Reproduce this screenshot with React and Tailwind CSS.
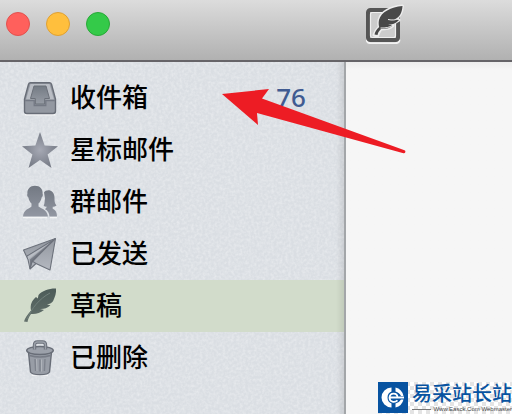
import { useState } from 'react'

const folders = [
  { id: 'inbox', label: '收件箱', icon: InboxIcon, count: 76 },
  { id: 'starred', label: '星标邮件', icon: StarIcon },
  { id: 'group', label: '群邮件', icon: PeopleIcon },
  { id: 'sent', label: '已发送', icon: PlaneIcon },
  { id: 'drafts', label: '草稿', icon: FeatherIcon },
  { id: 'trash', label: '已删除', icon: TrashIcon },
]

function InboxIcon() {
  return (
    <svg viewBox="0 0 36 36" className="size-9 shrink-0" aria-hidden="true">
      <path d="M3.5 34.8h29" stroke="#f4f5f6" strokeWidth="1.5" strokeLinecap="round" />
      <path d="M8.500 2.700h19q1.500 0 2 1.500l4 15v11.800a2.500 2.500 0 0 1-2.500 2.500H5a2.500 2.500 0 0 1-2.500-2.500V19.200l4-15q.5-1.500 2-1.500z" fill="#9398a1" stroke="#686d77" strokeWidth="1.400" />
      <path d="M8.500 4h19l4.500 15.500H4z" fill="#b9bdc4" />
      <path d="M12 6h12l3.500 12.500h-4.800v5.500h-9.400v-5.500H8.500z" fill="url(#tray)" stroke="#6b7079" strokeWidth="1" />
      <path d="M3.200 20.500h9V25.500h11.600v-5h9" fill="none" stroke="#747984" strokeWidth="1.300" />
    </svg>
  )
}

function StarIcon() {
  return (
    <svg viewBox="0 0 36 36" className="size-9 shrink-0" aria-hidden="true">
      <path d="M18 0l4.600 13.600L36 14.200 25.600 22.500 29.500 36 18 28 6.500 36l3.900-13.500L0 14.200l13.400-.6z" fill="url(#glow)" />
    </svg>
  )
}

function PeopleIcon() {
  return (
    <svg viewBox="0 0 36 36" className="size-9 shrink-0" aria-hidden="true">
      <path d="M1 33.500h24M28 33.500h7" stroke="#f4f5f6" strokeWidth="1.500" />
      <path d="M22 8.500c1.500-2.500 6-3 8.500-.5 2 2 2.200 5 2 8 .1 2.500.8 4 2 5.500-1 1-2.300 1.200-3.800 1.200v2c2.500 1.300 4.300 3 4.300 7.800h-7.500c-.3-3.700-1.800-6-4.500-7.200l2-2.600c-1.500 0-2.500-.3-3.300-1 1.300-2.700.7-4.700 1.300-7.200z" fill="url(#steel)" />
      <path d="M13 1.700c5 0 8 3.300 7.600 8 .6 1.500 0 3-1 3.700-.5 2.800-1.600 4.800-3.100 6v3c1.500 1.700 8.500 2.300 9.500 10.100H1c.5-7.300 6.500-8 8.500-10.100v-3c-1.500-1.200-2.600-3.200-3.100-6-1-.7-1.600-2.200-1-3.700-.4-4.700 2.600-8 7.600-8z" fill="url(#steel)" />
    </svg>
  )
}

function PlaneIcon() {
  return (
    <svg viewBox="0 0 36 36" className="size-9 shrink-0" aria-hidden="true">
      <path d="M33.500 2.500L1.500 14l4.500 9.500L8 33l6-5.500 14 6.500z" fill="url(#paper)" stroke="#6c717b" strokeWidth="1.100" strokeLinejoin="round" />
      <path d="M33 3L6 18.500v5L33 3z" fill="#b9bdc4" />
      <path d="M33 3L8 23.500V33l2.500-6.500z" fill="#777c86" />
      <path d="M33 3L5 20M33 3L10 25l4 2.500M10 25l-2 8" fill="none" stroke="#6c717b" strokeWidth="1.100" />
    </svg>
  )
}

function FeatherIcon() {
  return (
    <svg viewBox="0 0 36 36" className="size-9 shrink-0" aria-hidden="true">
      <path d="M34 .5C27 .3 20 3 16.500 7l-.7 3.500-1.800-1.500C9.500 13 8 17 9 22.500 5 27 3 30 2 33.500l3.500.5c.5-3 1.500-5 3.500-8 5 .5 9-1 13-4l-4-1c4 .2 7-.8 10.500-3.800l-3.500-.8c2.500-.3 4.500-1.200 6-3.200C33 9 34.500 5 34 .5z" fill="url(#quill)" />
      <path d="M5 31C10 20 17 11 28 5" fill="none" stroke="#71807b" strokeWidth="1" />
    </svg>
  )
}

function TrashIcon() {
  return (
    <svg viewBox="0 0 36 36" className="size-9 shrink-0" aria-hidden="true">
      <path d="M10 35.500q8 2 16 0" fill="none" stroke="#f4f5f6" strokeWidth="1.500" />
      <path d="M6.500 12h23l-2 20c-2 3.500-17 3.500-19 0z" fill="#989da6" stroke="#686d77" strokeWidth="1.400" />
      <path d="M7.500 15.500q10.500 3 21 0" fill="none" stroke="#777c86" strokeWidth="1.600" />
      <path d="M13 19l.6 12M18 19.500v12M23 19l-.6 12" stroke="#7e838d" strokeWidth="1.400" />
      <path d="M14.500 19l.5 12M19.500 19.500v12" stroke="#b0b4bb" strokeWidth="1" />
      <ellipse cx="18" cy="10.500" rx="13.300" ry="4" fill="#9ca1aa" stroke="#686d77" strokeWidth="1.400" />
      <path d="M12.500 9.500V5q0-3 3-3h5q3 0 3 3v4.500" fill="none" stroke="#6b707a" strokeWidth="3.400" />
      <path d="M12.500 9.500V5q0-3 3-3h5q3 0 3 3v4.500" fill="none" stroke="#9ba0a9" strokeWidth="1.400" />
    </svg>
  )
}

function ComposeIcon() {
  return (
    <svg viewBox="0 0 40 44" className="h-11 w-10" aria-hidden="true">
      <path d="M.5 39.500q.5 3.700 4.500 3.700h24q4 0 4.500-3.700" fill="none" stroke="#f2f2f2" strokeWidth="2" />
      <rect x="2" y="10" width="30" height="30" rx="2.500" fill="none" stroke="#555555" strokeWidth="4" />
      <rect x="4.500" y="12.500" width="25" height="25" rx="2" fill="#cccccc" stroke="#efefef" strokeWidth="1.200" />
      <path d="M36.500 6C25 7 15 12 13 20c-.6 3-.3 5 .2 7C10 30 9 32.500 8 35l3.500 1c.5-3 2-5 3.500-7 6 0 9-1 12-3.500l-4-1c4-.5 6-1.500 10-4.500l-4-1c5-2 7-6 7.500-13z" fill="#ededed" stroke="#ededed" strokeWidth="3" strokeLinejoin="round" />
      <path d="M36.500 6C25 7 15 12 13 20c-.6 3-.3 5 .2 7C10 30 9 32 8.500 34.500l3 .5c.5-3 2-4.500 3.500-6 5 .2 9-.8 12-3.500l-5-.8c4 0 8-1.200 11-4.700l-4-.8c4.500-2 7-6 7.500-13.200z" fill="#484848" />
      <path d="M14.500 28c5 .2 9-.5 12.500-2.800M22 19.500c4 1 8 .5 11-1" fill="none" stroke="#ededed" strokeWidth="1" />
    </svg>
  )
}

function IconPaints() {
  return (
    <svg className="absolute size-0" aria-hidden="true">
      <defs>
        <linearGradient id="steel" x1="0" y1="0" x2="0" y2="1">
          <stop offset="0" stopColor="#737983" />
          <stop offset="1" stopColor="#9297a2" />
        </linearGradient>
        <linearGradient id="tray" x1="0" y1="0" x2="0" y2="1">
          <stop offset="0" stopColor="#747b84" />
          <stop offset="1" stopColor="#979ca5" />
        </linearGradient>
        <linearGradient id="paper" x1="0" y1="0" x2="0" y2="1">
          <stop offset="0" stopColor="#92979f" />
          <stop offset="1" stopColor="#b4b8c0" />
        </linearGradient>
        <linearGradient id="quill" x1="0" y1="0" x2="0" y2="1">
          <stop offset="0" stopColor="#4c5b58" />
          <stop offset="1" stopColor="#64716c" />
        </linearGradient>
        <radialGradient id="glow">
          <stop offset="0" stopColor="#a6a9b4" />
          <stop offset="1" stopColor="#777c87" />
        </radialGradient>
      </defs>
    </svg>
  )
}

function PaperTexture() {
  return (
    <svg className="pointer-events-none absolute inset-0 size-full opacity-40" aria-hidden="true">
      <filter id="grain">
        <feTurbulence type="fractalNoise" baseFrequency="0.35" numOctaves="2" seed="4" />
        <feColorMatrix values="0 0 0 0 1  0 0 0 0 1  0 0 0 0 1  1.6 0 0 0 -0.55" />
      </filter>
      <rect width="100%" height="100%" filter="url(#grain)" />
    </svg>
  )
}

function Arrow() {
  return (
    <svg viewBox="0 0 184 66" className="pointer-events-none absolute top-[88px] left-[222px] h-[66px] w-[184px]" aria-hidden="true">
      <path d="M0 6l47-5-7 9.500 142.500 51.700a1.600 1.600 0 0 1-1 3L35 25l1 12z" fill="#ed1c24" />
    </svg>
  )
}

function Watermark() {
  return (
    <div className="absolute right-0 bottom-0 flex h-8 gap-1 bg-[repeating-conic-gradient(#e4e4e4_0_25%,#ffffff_0_50%)] bg-[length:8px_8px] font-['Liberation_Sans','Noto_Sans_CJK_SC',sans-serif]">
      <svg viewBox="0 0 30 32" className="h-8 w-[30px]" aria-hidden="true">
        <path d="M0 0h30v31H0z" fill="#0753a1" />
        <path d="M13.500 5.500v4A6.500 6.500 0 0 0 13.500 21.500v4A10 10 0 0 1 13.500 5.500zM17.500 5.500v4q4 1 5.500 4.500h2.500q-1.500-7-8-8.500zM17.500 25.500v-4q4-1 5.500-4h2.500q-1.500 6.500-8 8z" fill="#fff" />
        <path d="M11.500 15.500h8c0-5-7.500-5.500-8 0 0 4.500 5 5.500 8 2.800M19 15.500h7" fill="none" stroke="#fff" strokeWidth="1.800" />
      </svg>
      <div className="flex flex-col">
        <span className="text-[20px] leading-6 font-medium text-[#0753a1]">易采站长站</span>
        <span className="flex items-center gap-0.5 text-[6px] leading-1.5 text-[#444]">
          <span className="h-px flex-1 bg-[#777]" />
          Www.Easck.Com Webmaster
        </span>
      </div>
    </div>
  )
}

export default function App() {
  const [active, setActive] = useState('drafts')

  return (
    <div className="relative flex min-h-screen flex-col overflow-hidden bg-[#f6f6f6] font-['Noto_Sans','Noto_Sans_CJK_SC',sans-serif]">
      <IconPaints />

      {/* Title bar */}
      <header className="flex h-[62px] border-b-2 border-[#666468] bg-linear-to-b from-[#dcdcdc] to-[#b1b1b1]">
        <div className="flex w-[346px] shrink-0 gap-4 px-1.5 pt-3">
          <button aria-label="关闭" className="size-6 rounded-full border border-[#e2514e] bg-[#ff605c]" />
          <button aria-label="最小化" className="size-6 rounded-full border border-[#dfa033] bg-[#ffbf3d]" />
          <button aria-label="缩放" className="size-6 rounded-full border border-[#28a937] bg-[#34ca49]" />
        </div>
        <button aria-label="写邮件" className="ml-5 self-start">
          <ComposeIcon />
        </button>
      </header>

      <div className="flex flex-1">
        {/* Folders */}
        <nav className="relative w-[346px] shrink-0 border-r-2 border-[#a3a6a9] bg-[#dadee3] py-2.5">
          <PaperTexture />
          <ul className="relative">
            {folders.map(({ id, label, icon: Icon, count }) => (
              <li key={id}>
                <button
                  onClick={() => setActive(id)}
                  className={`flex h-[52px] w-full items-center gap-3 pr-[38px] pl-[22px] text-left text-[26px] leading-8 font-medium text-black ${
                    active === id ? 'bg-[#d2dccb]' : ''
                  }`}
                >
                  <Icon />
                  <span className="flex-1 pb-1 font-['Noto_Sans_CJK_SC',sans-serif]">{label}</span>
                  {count && <span className="pb-0.5 text-[#405b91]">{count}</span>}
                </button>
              </li>
            ))}
          </ul>
          <div className="pointer-events-none absolute inset-y-0 right-0 w-2 bg-linear-to-r from-transparent to-black/8" />
        </nav>

        <main className="flex-1 bg-linear-to-b from-[#ededed] to-[#f6f6f6] to-[8px]" />
      </div>

      <Arrow />
      <Watermark />
    </div>
  )
}
